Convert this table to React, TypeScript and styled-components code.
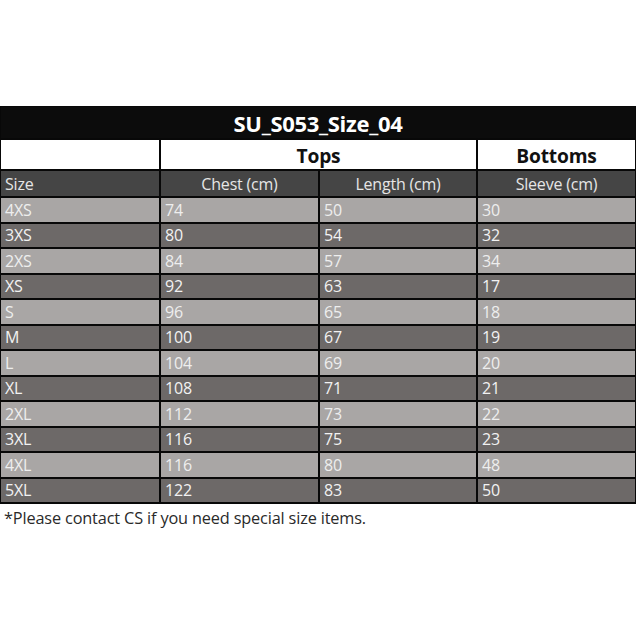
import React from "react";
import styled, { createGlobalStyle } from "styled-components";

const Global = createGlobalStyle`
  html, body { margin: 0; padding: 0; background: #ffffff; }
  body { font-family: "Open Sans", "Liberation Sans", sans-serif; }
`;

const Page = styled.div`
  width: 637px;
  height: 637px;
  padding-top: 106px;
  box-sizing: border-box;
`;

const Table = styled.div`
  width: 636px;
  display: grid;
  grid-template-columns: 158px 157px 156px 157px;
  grid-template-rows: 31px 29px 25px repeat(12, 23.5px);
  gap: 2px;
  padding: 1px 1px 2px 1px;
  background: #080808;
  box-sizing: border-box;
`;

const Title = styled.div`
  grid-column: 1 / -1;
  background: #0c0c0c;
  color: #ffffff;
  font-weight: 700;
  font-size: 22px;
  display: flex;
  align-items: center;
  justify-content: center;
  letter-spacing: -0.3px;
`;

const GroupCell = styled.div<{ $span?: number }>`
  grid-column: span ${(p) => p.$span ?? 1};
  background: #ffffff;
  color: #111111;
  font-weight: 700;
  font-size: 19.2px;
  display: flex;
  align-items: center;
  justify-content: center;
  padding-top: 2px;
  letter-spacing: -0.2px;
`;

const HeadCell = styled.div<{ $left?: boolean }>`
  background: #454545;
  color: #e6e6e6;
  font-size: 16px;
  display: flex;
  align-items: center;
  justify-content: ${(p) => (p.$left ? "flex-start" : "center")};
  padding-left: ${(p) => (p.$left ? "4px" : "0")};
  letter-spacing: -0.2px;
`;

const DataCell = styled.div<{ $dark: boolean }>`
  background: ${(p) => (p.$dark ? "#6d6968" : "#a9a6a5")};
  color: ${(p) => (p.$dark ? "#f2f2f2" : "#eeeeee")};
  font-size: 16px;
  display: flex;
  align-items: center;
  padding-left: 4px;
  letter-spacing: -0.2px;
`;

const Note = styled.div`
  margin-top: 3px;
  padding-left: 4px;
  font-size: 16.3px;
  color: #2a2a2a;
  letter-spacing: -0.15px;
`;

const rows: [string, number, number, number][] = [
  ["4XS", 74, 50, 30],
  ["3XS", 80, 54, 32],
  ["2XS", 84, 57, 34],
  ["XS", 92, 63, 17],
  ["S", 96, 65, 18],
  ["M", 100, 67, 19],
  ["L", 104, 69, 20],
  ["XL", 108, 71, 21],
  ["2XL", 112, 73, 22],
  ["3XL", 116, 75, 23],
  ["4XL", 116, 80, 48],
  ["5XL", 122, 83, 50],
];

export default function App() {
  return (
    <>
      <Global />
      <Page>
        <Table>
          <Title>SU_S053_Size_04</Title>
          <GroupCell />
          <GroupCell $span={2}>Tops</GroupCell>
          <GroupCell>Bottoms</GroupCell>
          <HeadCell $left>Size</HeadCell>
          <HeadCell>Chest (cm)</HeadCell>
          <HeadCell>Length (cm)</HeadCell>
          <HeadCell>Sleeve (cm)</HeadCell>
          {rows.map((r, i) =>
            r.map((v, j) => (
              <DataCell key={`${i}-${j}`} $dark={i % 2 === 1}>
                {v}
              </DataCell>
            ))
          )}
        </Table>
        <Note>*Please contact CS if you need special size items.</Note>
      </Page>
    </>
  );
}
